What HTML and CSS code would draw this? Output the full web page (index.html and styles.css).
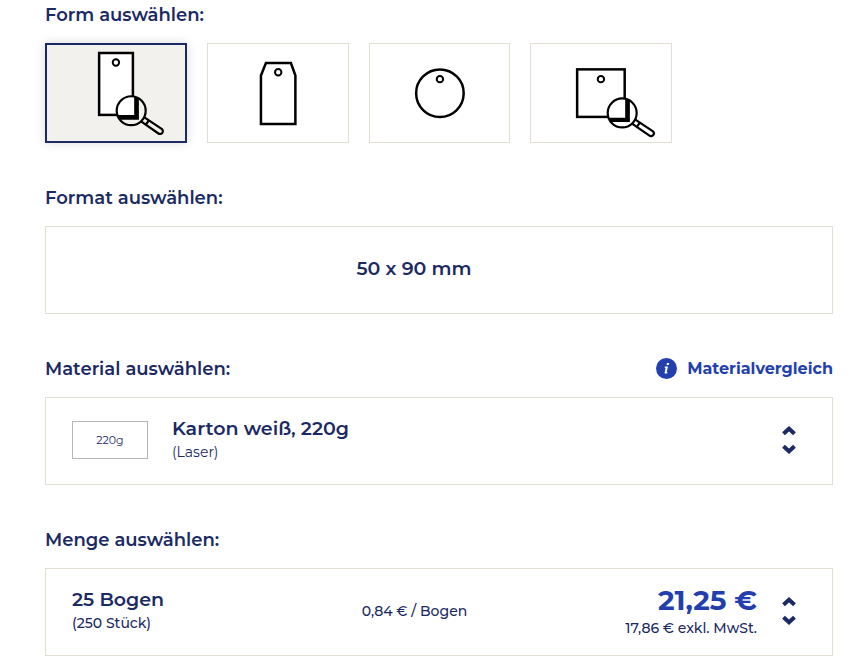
FILE: index.html
```html
<!DOCTYPE html>
<html lang="de">
<head>
    <meta charset="UTF-8">
    <meta name="viewport" content="width=device-width, initial-scale=1.0">
    <title>Form auswählen</title>
    <link rel="stylesheet" href="styles.css">
</head>
<body>

<form class="configurator">
    <section class="option-group">
        <div class="option-header">
            <h2>Form auswählen:</h2>
        </div>
        <div class="shape-list">
            <label class="shape">
                <input type="radio" name="shape" value="rechteck" aria-label="Rechteck" checked>
                <svg viewBox="0 0 142 100" fill="none" stroke="#000" stroke-width="2.5">
                    <rect x="54.2" y="10" width="33.8" height="62" fill="#fff"/>
                    <circle cx="71" cy="19.5" r="3.2" stroke-width="2"/>
                    <circle cx="86.3" cy="67.8" r="14.5" fill="#f3f1ed" stroke="none"/>
                    <path d="M72 71.500A14.5 14.5 0 0 1 89.300 53.600V72.300H72z" fill="#fff" stroke="none"/>
                    <path d="M89.3 53.6L94 55.800V76.800H75L73 72H89.3z" fill="#000" stroke="none"/>
                    <circle cx="86.3" cy="67.8" r="14.5" stroke-width="2.2"/>
                    <path d="M99.500 74.5L116.8 86a2.7 2.7 0 0 1-3.2 4.600L96.500 78.800M104 77.500L100.8 82" stroke-width="2.2"/>
                </svg>
            </label>
            <label class="shape">
                <input type="radio" name="shape" value="anhaenger" aria-label="Anhänger">
                <svg viewBox="0 0 142 100" fill="none" stroke="#000" stroke-width="2.5">
                    <path d="M59 20H84L88.500 32.5V81.2H54V32.5z"/>
                    <circle cx="71.3" cy="29.3" r="3.2" stroke-width="2"/>
                </svg>
            </label>
            <label class="shape">
                <input type="radio" name="shape" value="rund" aria-label="Rund">
                <svg viewBox="0 0 142 100" fill="none" stroke="#000" stroke-width="2.5">
                    <circle cx="71" cy="50.3" r="23.8"/>
                    <circle cx="71" cy="36.2" r="3.2" stroke-width="2"/>
                </svg>
            </label>
            <label class="shape">
                <input type="radio" name="shape" value="quadrat" aria-label="Quadrat">
                <svg viewBox="0 0 142 100" fill="none" stroke="#000" stroke-width="2.5">
                    <rect x="47.2" y="26.4" width="47.6" height="47.6"/>
                    <circle cx="71" cy="36.2" r="3.2" stroke-width="2"/>
                    <circle cx="92.3" cy="70" r="14.5" fill="#fff" stroke="none"/>
                    <path d="M95.3 55.8L100 58V79H81L79 74.8H95.3z" fill="#000" stroke="none"/>
                    <circle cx="92.3" cy="70" r="14.5" stroke-width="2.2"/>
                    <path d="M105.500 76.700L122.8 88.2a2.7 2.7 0 0 1-3.2 4.600L102.500 81M110 79.700L106.8 84.2" stroke-width="2.2"/>
                </svg>
            </label>
        </div>
    </section>

    <section class="option-group">
        <div class="option-header">
            <h2>Format auswählen:</h2>
        </div>
        <button type="button" class="select-box format-box">
            <span class="title">50 x 90 mm</span>
        </button>
    </section>

    <section class="option-group">
        <div class="option-header">
            <h2>Material auswählen:</h2>
            <a href="#" class="compare-link">
                <svg width="21" height="21" viewBox="0 0 21 21" fill="#233fae">
                    <circle cx="10.5" cy="10.5" r="10.5"/>
                    <path d="M11 5h2.2l-.5 2h-2.2zM8.800 8.4h3.2l-1.3 5.6h.8l-.3 1.4H8.500L9.6 9.8h-1z" fill="#fff"/>
                </svg>
                Materialvergleich
            </a>
        </div>
        <button type="button" class="select-box">
            <span class="swatch">220g</span>
            <span class="details">
                <span class="title">Karton weiß, 220g</span>
                <span class="note light">(Laser)</span>
            </span>
            <svg class="arrows" width="14" height="30" viewBox="0 0 14 30" fill="none" stroke="#1b2a63" stroke-width="4">
                <path d="M1.500 8.800L7 3.800L12.500 8.800M1.500 21.200L7 26.200L12.500 21.200"/>
            </svg>
        </button>
    </section>

    <section class="option-group">
        <div class="option-header">
            <h2>Menge auswählen:</h2>
        </div>
        <button type="button" class="select-box quantity-box">
            <span class="details">
                <span class="title">25 Bogen</span>
                <span class="note">(250 Stück)</span>
            </span>
            <span class="note">0,84 € / Bogen</span>
            <span class="price">
                <span class="total">21,25 €</span>
                <span class="note">17,86 € exkl. MwSt.</span>
            </span>
            <svg class="arrows" width="14" height="30" viewBox="0 0 14 30" fill="none" stroke="#1b2a63" stroke-width="4">
                <path d="M1.500 8.800L7 3.800L12.500 8.800M1.500 21.200L7 26.200L12.500 21.200"/>
            </svg>
        </button>
    </section>
</form>

</body>
</html>
```

FILE: styles.css
```css
* {
    margin: 0;
    padding: 0;
    box-sizing: border-box;
}

body {
    font-family: Montserrat, Inter, sans-serif;
    background-color: #fff;
    color: #1b2a63;
}

.configurator {
    padding: 2px 27px 15px 45px;
}

.option-group {
    margin-bottom: 42px;
}

.option-group:last-child {
    margin-bottom: 0;
}

.option-header {
    display: flex;
    align-items: center;
    justify-content: space-between;
    height: 26px;
    margin-bottom: 15px;
}

h2 {
    font-size: 18px;
    font-weight: 600;
    line-height: 24px;
}

.compare-link {
    display: flex;
    align-items: center;
    gap: 10px;
    color: #233fae;
    font-size: 16px;
    font-weight: 700;
    text-decoration: none;
}

.shape-list {
    display: grid;
    grid-template-columns: repeat(4, 18%);
    column-gap: 20px;
}

.shape {
    display: block;
    outline: 1px solid #e3ded2;
    outline-offset: -1px;
    cursor: pointer;
}

.shape input {
    display: block;
    appearance: none;
    width: 0;
    height: 0;
}

.shape svg {
    display: block;
    width: 100%;
}

.shape:has(input:checked) {
    background-color: #f3f1ed;
    outline: 2px solid #1b2a63;
    outline-offset: -2px;
    box-shadow: 0 0 10px rgba(0, 0, 0, 0.15);
}

.select-box {
    display: flex;
    align-items: center;
    width: 100%;
    min-height: 88px;
    padding: 0 36px 2px 26px;
    border: 1px solid #e3ded2;
    background-color: #fff;
    color: inherit;
    font-family: inherit;
    text-align: left;
    cursor: pointer;
}

.format-box {
    justify-content: center;
    padding-right: 76px;
}

.title {
    font-size: 19px;
    font-weight: 600;
    line-height: 24px;
}

.note {
    font-size: 14px;
    font-weight: 500;
    line-height: 22px;
}

.light {
    font-weight: 400;
}

.details {
    display: flex;
    flex: 1;
    flex-direction: column;
}

.swatch {
    width: 76px;
    margin-right: 24px;
    border: 1px solid #b5b5b5;
    font-size: 11px;
    line-height: 36px;
    text-align: center;
}

.quantity-box {
    display: grid;
    grid-template-columns: 1fr auto 1fr auto;
}

.quantity-box .arrows {
    margin-left: 25px;
}

.price {
    display: flex;
    flex-direction: column;
    text-align: right;
}

.total {
    color: #233fae;
    font-size: 28px;
    font-weight: 700;
    line-height: 34px;
}
```
